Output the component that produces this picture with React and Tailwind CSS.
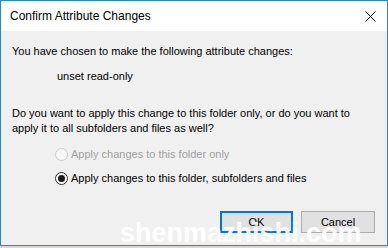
export default function App() {
  return (
    <div className="relative w-[388px] h-[248px] bg-[#d8d8d8] overflow-hidden" style={{ fontFamily: '"Liberation Sans", Arial, sans-serif' }}>
      <div className="flex flex-col w-[388px] h-[246px] border border-[#2e88b8] bg-[#f0f0f0]">
        {/* Title bar */}
        <div className="flex items-center justify-between h-[30px] bg-white pl-[9px] pr-[10px] shrink-0">
          <span className="text-[12px] text-black">Confirm Attribute Changes</span>
          <svg width="11" height="11" viewBox="0 0 11 11" className="mr-[1px]">
            <path d="M0.5 0.5L10.5 10.5M10.5 0.5L0.5 10.5" stroke="#000" strokeWidth="1" />
          </svg>
        </div>

        {/* Body */}
        <div className="flex flex-col flex-1 px-[11px] text-[11px] text-black leading-[15px] whitespace-nowrap">
          <p className="mt-[13px]">You have chosen to make the following attribute changes:</p>
          <p className="mt-[10px] pl-[45px]">unset read-only</p>
          <p className="mt-[22px]">
            Do you want to apply this change to this folder only, or do you want to
            <br />
            apply it to all subfolders and files as well?
          </p>

          <div className="flex flex-col gap-[9px] mt-[11px] pl-[43px]">
            <label className="flex items-center gap-[3px] text-[#a0a0a0]">
              <span className="w-[13px] h-[13px] rounded-full border border-[#cccccc] bg-[#f7f7f7]" />
              Apply changes to this folder only
            </label>
            <label className="flex items-center gap-[3px]">
              <span className="flex items-center justify-center w-[13px] h-[13px] rounded-full border border-[#333333] bg-white">
                <span className="w-[7px] h-[7px] rounded-full bg-[#1a1a1a]" />
              </span>
              Apply changes to this folder, subfolders and files
            </label>
          </div>

          <div className="flex justify-end gap-[8px] mt-[25px] pr-[1px]">
            <button className="w-[73px] h-[22px] border-2 border-[#0078d7] bg-[#e1e1e1] text-[11px] leading-none">OK</button>
            <button className="w-[74px] h-[22px] border border-[#adadad] bg-[#e1e1e1] text-[11px] leading-none">Cancel</button>
          </div>
        </div>
      </div>

      <span className="absolute left-[120px] top-[218px] text-[27px] leading-[30px] font-bold text-white/90">
        shenmazhishi.com
      </span>
    </div>
  );
}
